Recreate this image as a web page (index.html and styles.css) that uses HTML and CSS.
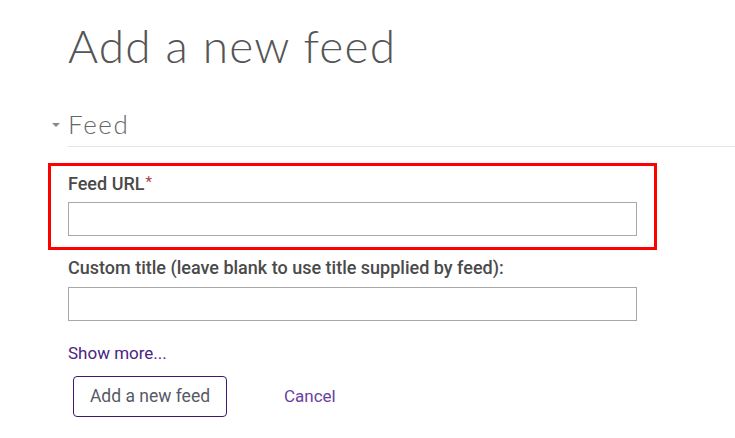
FILE: index.html
```html
<!DOCTYPE html>
<html>
<head>
<meta charset="utf-8">
<link rel="stylesheet" href="styles.css">
</head>
<body>
<div class="page">
  <h1 class="title">Add a new feed</h1>
  <div class="legend">
    <span class="caret"></span>
    <span class="legend-text">Feed</span>
  </div>
  <div class="highlight">
    <label class="label">Feed URL<span class="req">*</span></label>
    <div class="input"></div>
  </div>
  <div class="field">
    <label class="label">Custom title (leave blank to use title supplied by feed):</label>
    <div class="input"></div>
  </div>
  <a class="more">Show more...</a>
  <div class="actions">
    <button class="btn">Add a new feed</button>
    <a class="cancel">Cancel</a>
  </div>
</div>
</body>
</html>
```
FILE: styles.css
```css
html, body { margin: 0; padding: 0; background: #fff; }
body { font-family: Roboto, "Liberation Sans", sans-serif; color: #495057; }
.page { padding-left: 48px; }
.title {
  margin: 17.6px 0 0 20px;
  font-family: Lato, "Open Sans", sans-serif;
  font-weight: 300;
  font-size: 46px;
  line-height: 1.2;
  letter-spacing: 1.2px;
  color: #555;
}
.legend {
  display: flex;
  align-items: center;
  margin: 36.5px 0 0 20px;
  padding-bottom: 5.5px;
  border-bottom: 1px solid #e5e5e5;
  position: relative;
}
.caret {
  position: absolute;
  left: -16px;
  top: 14px;
  width: 0; height: 0;
  border-left: 4.5px solid transparent;
  border-right: 4.5px solid transparent;
  border-top: 4.5px solid #888;
}
.legend-text {
  font-family: Lato, "Open Sans", sans-serif;
  font-weight: 300;
  font-size: 26px;
  line-height: 1.2;
  letter-spacing: 1.6px;
  color: #666;
}
.highlight {
  margin-top: 16px;
  width: 569px;
  border: 3px solid #ff0000;
  padding: 3.9px 17px 11px 17px;
}
.label {
  display: block;
  font-size: 18px;
  font-weight: 500;
  line-height: 24px;
  color: #4a4a4a;
}
.req { color: #b23b3b; font-size: 15px; vertical-align: 3px; font-weight: 400; margin-left: 1px; }
.input {
  margin-top: 6.1px;
  width: 567px;
  height: 32px;
  border: 1px solid #a8a8a8;
}
.field { margin: 5.9px 0 0 20px; }
.field .input { margin-top: 7.1px; }
.more {
  display: block;
  margin: 20px 0 0 20px;
  font-size: 17px;
  line-height: 24px;
  color: #4b2382;
}
.actions {
  display: flex;
  align-items: center;
  margin: 11px 0 0 25px;
  gap: 57px;
}
.btn {
  box-sizing: border-box;
  width: 154px;
  height: 41px;
  background: #fff;
  border: 1px solid #3d1a6e;
  border-radius: 4px;
  font-family: Roboto, "Liberation Sans", sans-serif;
  font-size: 17.5px;
  color: #555a66;
  padding: 0;
}
.cancel {
  font-size: 17px;
  color: #6a3fa0;
}
```
